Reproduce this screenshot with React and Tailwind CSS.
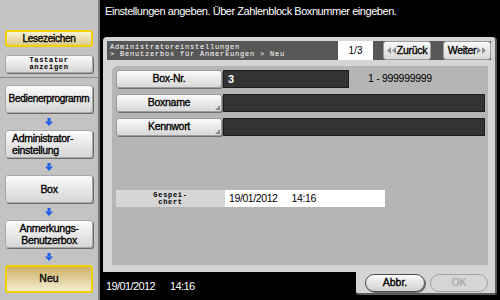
import React from "react";

const SANS = "font-['Liberation_Sans',Arial,sans-serif]";
const MONO = "font-['Liberation_Mono',monospace]";
const BOLDISH = "[-webkit-text-stroke:0.35px_black]";

function Arrow() {
  return (
    <div className="flex h-[17px] items-center justify-center">
      <svg width="8" height="8" viewBox="0 0 8 8">
        <rect x="2.5" y="0" width="3" height="3.5" fill="#1f5ee6" />
        <polygon points="0,3.5 8,3.5 4,8" fill="#1f5ee6" />
      </svg>
    </div>
  );
}

function SideButton({ children }) {
  return (
    <div
      className={`flex h-[28px] items-center justify-center rounded-[3px] border border-[#a8a8a8] bg-linear-to-b from-[#fbfbfb] to-[#d6d6d6] text-center text-[10.5px] leading-[12px] tracking-[-0.3px] text-black shadow-[1px_1px_0_#6c6c6c] ${BOLDISH}`}
    >
      {children}
    </div>
  );
}

function DoubleTri({ dir }) {
  return (
    <svg width="9" height="7" viewBox="0 0 9 7">
      {dir === "left" ? (
        <>
          <polygon points="4,0 4,7 0,3.5" fill="#8f8f8f" />
          <polygon points="9,0 9,7 5,3.5" fill="#8f8f8f" />
        </>
      ) : (
        <>
          <polygon points="0,0 0,7 4,3.5" fill="#8f8f8f" />
          <polygon points="5,0 5,7 9,3.5" fill="#8f8f8f" />
        </>
      )}
    </svg>
  );
}

function RowButton({ label, mark }) {
  return (
    <div
      className={`relative flex h-[18px] w-[106px] items-center justify-center rounded-[3px] border border-[#9c9c9c] bg-linear-to-b from-[#fafafa] to-[#d8d8d8] text-[10.5px] tracking-[-0.3px] text-black shadow-[1px_1px_0_#6e6e6e] ${BOLDISH}`}
    >
      {label}
      {mark && (
        <svg className="absolute bottom-[1px] right-[1px]" width="5" height="5" viewBox="0 0 5 5">
          <polygon points="5,0 5,5 0,5" fill="#8a8a8a" />
        </svg>
      )}
    </div>
  );
}

export default function App() {
  return (
    <div className={`flex h-[300px] w-[500px] overflow-hidden bg-black ${SANS}`}>
      {/* sidebar */}
      <div className="flex h-full w-[100px] flex-col border-r-2 border-[#7d7d7d] bg-[#c3c3c3]">
        <div className="flex h-[77px] flex-col gap-[8px] px-[5px] pt-[30px]">
          <div
            className={`flex h-[17px] items-center justify-center rounded-[3px] border-2 border-[#f0d000] bg-linear-to-b from-[#f6f0d6] to-[#dccb8c] text-[10px] tracking-[-0.3px] text-black ${BOLDISH}`}
          >
            Lesezeichen
          </div>
          <div
            className={`flex h-[18px] flex-col items-center justify-center rounded-[3px] border border-[#a8a8a8] bg-linear-to-b from-[#fbfbfb] to-[#d6d6d6] text-[7px] font-bold leading-[7px] tracking-[0.7px] text-black shadow-[1px_1px_0_#6c6c6c] ${MONO}`}
          >
            <span>Tastatur</span>
            <span>anzeigen</span>
          </div>
        </div>
        <div className="border-t border-[#8c8c8c]" />
        <div className="flex flex-col px-[5px] pt-[7px]">
          <SideButton>
            <span className="text-[10px]">Bedienerprogramm</span>
          </SideButton>
          <Arrow />
          <SideButton>
            <span className="block w-full pl-[6px] text-left">
              Administrator-
              <br />
              einstellung
            </span>
          </SideButton>
          <Arrow />
          <SideButton>Box</SideButton>
          <Arrow />
          <SideButton>
            <span>
              Anmerkungs-
              <br />
              Benutzerbox
            </span>
          </SideButton>
          <Arrow />
          <div
            className={`flex h-[28px] items-center justify-center rounded-[3px] border-2 border-[#f0d000] bg-linear-to-b from-[#cdb266] to-[#f5eed2] text-[10.5px] text-black ${BOLDISH}`}
          >
            Neu
          </div>
        </div>
      </div>

      {/* main */}
      <div className="flex flex-1 flex-col">
        <div className="h-[37px] px-[5px] pt-[3px] text-[11px] tracking-[-0.45px] text-white">
          Einstellungen angeben. Über Zahlenblock Boxnummer eingeben.
        </div>

        <div className="mx-[3px] flex h-[235px] flex-col rounded-t-[4px] border-r-2 border-[#5a5a5a] bg-[#d5d5d5] px-[4px] pt-[4px]">
          <div className="flex h-[19px] items-center bg-[#575757]">
            <div className={`pl-[3px] text-[7px] leading-[7px] tracking-[0.8px] text-white ${MONO}`}>
              <div>Administratoreinstellungen</div>
              <div>&gt; Benutzerbox für Anmerkungen &gt; Neu</div>
            </div>
            <div className="ml-auto flex h-full w-[35px] items-center justify-center bg-white text-[10px] text-black">
              1/3
            </div>
            <div
              className={`ml-[10px] flex h-[19px] w-[48px] items-center justify-center gap-[1px] rounded-[3px] border border-[#9c9c9c] bg-linear-to-b from-[#fafafa] to-[#d8d8d8] text-[10.5px] tracking-[-0.3px] text-black ${BOLDISH}`}
            >
              <DoubleTri dir="left" />
              Zurück
            </div>
            <div
              className={`ml-[12px] flex h-[19px] w-[48px] items-center justify-center gap-[1px] rounded-[3px] border border-[#9c9c9c] bg-linear-to-b from-[#fafafa] to-[#d8d8d8] text-[10.5px] tracking-[-0.3px] text-black ${BOLDISH}`}
            >
              Weiter
              <DoubleTri dir="right" />
            </div>
          </div>

          <div className="ml-[5px] mr-[3px] mt-[6px] h-[199px] rounded-tl-[6px] bg-[#b5b5b5] pl-[4px] pt-[4px]">
            <div className="flex flex-col gap-[6px]">
              <div className="flex items-center">
                <RowButton label="Box-Nr." />
                <div className="ml-[1px] flex h-[18px] w-[126px] items-center border border-[#1e1e1e] bg-[#333333] pl-[4px] text-[11px] font-bold text-white">
                  3
                </div>
                <div className="ml-[19px] text-[10.5px] tracking-[-0.3px] text-black">1 - 999999999</div>
              </div>
              <div className="flex items-center">
                <RowButton label="Boxname" mark />
                <div className="ml-[1px] h-[18px] w-[262px] border border-[#1e1e1e] bg-[#333333]" />
              </div>
              <div className="flex items-center">
                <RowButton label="Kennwort" mark />
                <div className="ml-[1px] h-[18px] w-[262px] border border-[#1e1e1e] bg-[#333333]" />
              </div>
            </div>

            <div className="mt-[54px] flex h-[17px]">
              <div
                className={`flex w-[109px] flex-col items-center justify-center bg-[#d6d6d6] text-[7px] font-bold leading-[7px] tracking-[0.7px] text-black ${MONO}`}
              >
                <span>Gespei-</span>
                <span>chert</span>
              </div>
              <div className="flex w-[160px] items-center bg-white pl-[4px] text-[10.5px] tracking-[-0.4px] text-black">
                19/01/2012<span className="ml-[14px]">14:16</span>
              </div>
            </div>
          </div>
        </div>

        <div className="flex h-[28px]">
          <div className="flex-1 pl-[6px] pt-[6px] text-[11px] tracking-[-0.6px] text-white">
            19/01/2012<span className="ml-[15px]">14:16</span>
          </div>
          <div className="mr-[3px] flex h-[23px] w-[141px] gap-[5px] rounded-b-[3px] border-b-2 border-r-2 border-[#5a5a5a] bg-[#d5d5d5] pl-[9px] pt-[2px]">
            <div
              className={`flex h-[18px] w-[60px] items-center justify-center rounded-full border border-[#4a4a4a] bg-linear-to-b from-[#fbfbfb] to-[#cfcfcf] text-[10.5px] text-black shadow-[1px_1px_0_#6c6c6c] ${BOLDISH}`}
            >
              Abbr.
            </div>
            <div className="flex h-[18px] w-[58px] items-center justify-center rounded-full border border-[#a3a3a3] text-[10.5px] text-[#a0a0a0]">
              OK
            </div>
          </div>
        </div>
      </div>
    </div>
  );
}
